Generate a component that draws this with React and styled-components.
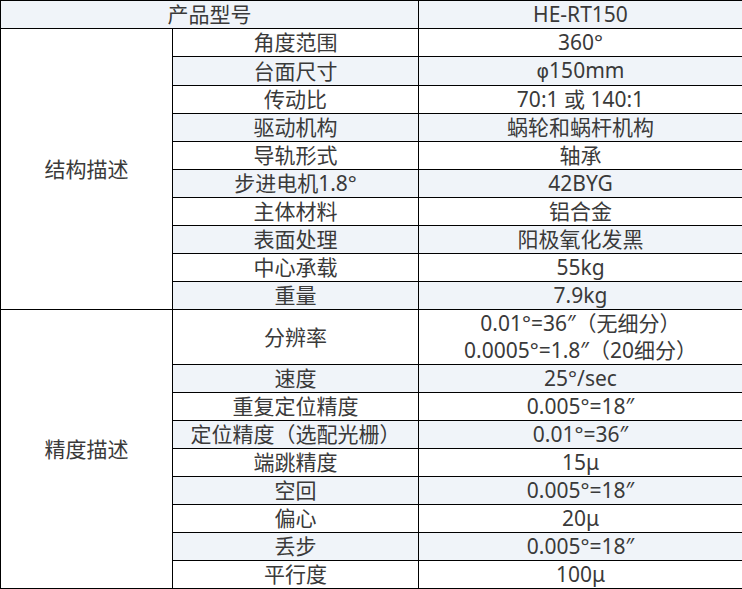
import React from "react";
import styled, { createGlobalStyle } from "styled-components";

const Global = createGlobalStyle`
  html, body { margin: 0; padding: 0; background: #fff; }
  body { font-family: "Noto Sans", "Noto Sans CJK SC", sans-serif; }
`;

const Table = styled.table`
  border-collapse: collapse;
  table-layout: fixed;
  width: 742px;
  color: #3a3a3a;
  font-family: "Noto Sans", "Noto Sans CJK SC", sans-serif;
  font-size: 21px;
`;

const Cell = styled.td`
  border: 1px solid #000;
  padding: 0;
  height: 27px;
  line-height: 27px;
  text-align: center;
  vertical-align: middle;
  white-space: nowrap;
  overflow: hidden;
  background: ${(p) => (p.$shaded ? "#f0f4f9" : "#fff")};
`;

const GroupCell = styled(Cell)`
  background: #fff;
`;

const Phi = styled.span`
  font-family: "DejaVu Sans", sans-serif;
  font-size: 19px;
`;

const groups = [
  {
    title: "结构描述",
    rows: [
      ["角度范围", "360°"],
      ["台面尺寸", <><Phi>φ</Phi>150mm</>],
      ["传动比", "70:1 或 140:1"],
      ["驱动机构", "蜗轮和蜗杆机构"],
      ["导轨形式", "轴承"],
      ["步进电机1.8°", "42BYG"],
      ["主体材料", "铝合金"],
      ["表面处理", "阳极氧化发黑"],
      ["中心承载", "55kg"],
      ["重量", "7.9kg"],
    ],
  },
  {
    title: "精度描述",
    rows: [
      ["分辨率", ["0.01°=36″（无细分）", "0.0005°=1.8″（20细分）"]],
      ["速度", "25°/sec"],
      ["重复定位精度", "0.005°=18″"],
      ["定位精度（选配光栅）", "0.01°=36″"],
      ["端跳精度", "15μ"],
      ["空回", "0.005°=18″"],
      ["偏心", "20μ"],
      ["丢步", "0.005°=18″"],
      ["平行度", "100μ"],
    ],
  },
];

export default function App() {
  return (
    <>
      <Global />
      <Table>
        <colgroup>
          <col style={{ width: 172 }} />
          <col style={{ width: 246 }} />
          <col style={{ width: 324 }} />
        </colgroup>
        <tbody>
          <tr>
            <Cell colSpan={2} $shaded>产品型号</Cell>
            <Cell $shaded>HE-RT150</Cell>
          </tr>
          {groups.map((g) =>
            g.rows.map(([name, value], i) => (
              <tr key={g.title + name}>
                {i === 0 && <GroupCell rowSpan={g.rows.length}>{g.title}</GroupCell>}
                <Cell $shaded={i % 2 === 1}>{name}</Cell>
                <Cell $shaded={i % 2 === 1}>
                  {Array.isArray(value)
                    ? value.map((v) => <div key={v}>{v}</div>)
                    : value}
                </Cell>
              </tr>
            ))
          )}
        </tbody>
      </Table>
    </>
  );
}
